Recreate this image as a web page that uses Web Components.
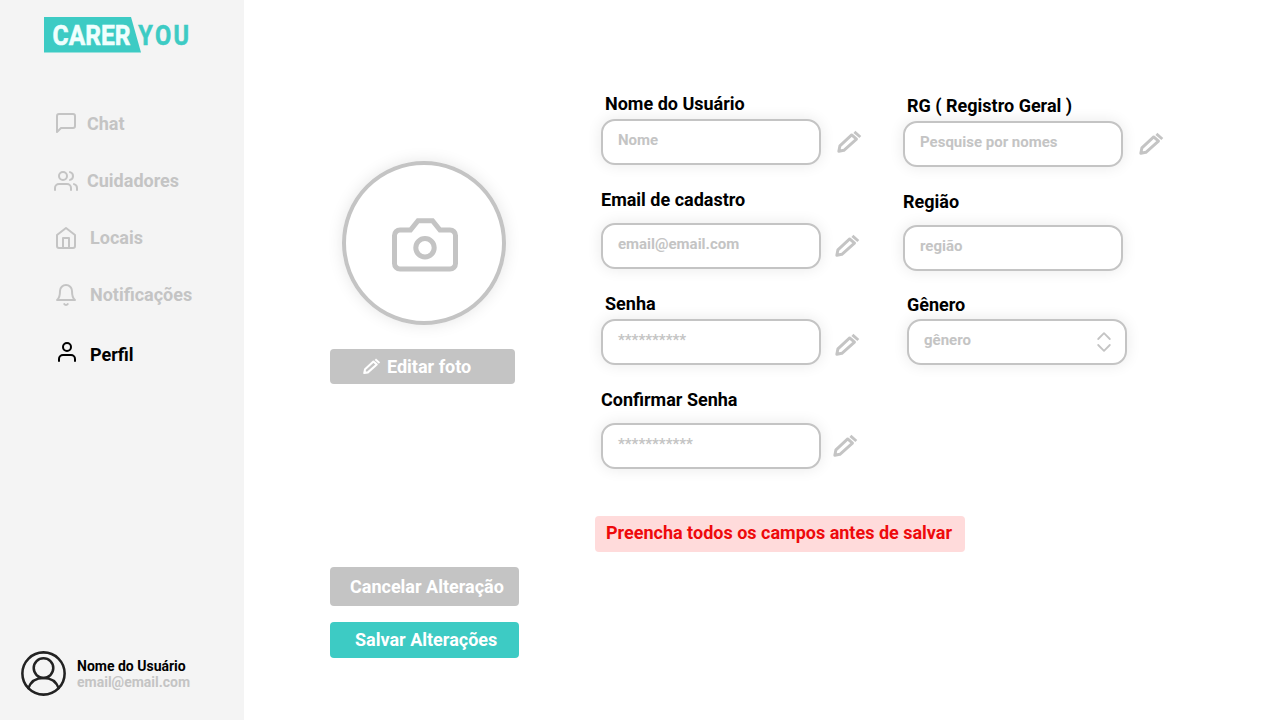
<!DOCTYPE html>
<html lang="pt-BR">
<head>
<meta charset="utf-8">
<title>Carer You - Perfil</title>
<style>
body{margin:0;background:#fff;font-family:Roboto,sans-serif;font-weight:700}
</style>
</head>
<body>
<profile-page></profile-page>
<script>
const define = (name, html) => {
  const t = document.createElement('template');
  t.innerHTML = html;
  customElements.define(name, class extends HTMLElement {
    constructor() {
      super();
      this.attachShadow({mode: 'open'}).append(t.content.cloneNode(true));
    }
  });
};

const icons = {
  chat: ['0 0 24 24', '<path d="M21 15a2 2 0 0 1-2 2H7l-4 4V5a2 2 0 0 1 2-2h14a2 2 0 0 1 2 2z"/>', 2],
  users: ['0 0 24 24', '<path d="M17 21v-2a4 4 0 0 0-4-4H5a4 4 0 0 0-4 4v2"/><circle cx="9" cy="7" r="4"/><path d="M23 21v-2a4 4 0 0 0-3-3.87M16 3.13a4 4 0 0 1 0 7.75"/>', 2],
  home: ['0 0 24 24', '<path d="M3 9l9-7 9 7v11a2 2 0 0 1-2 2H5a2 2 0 0 1-2-2z"/><path d="M9 22V12h6v10"/>', 2],
  bell: ['0 0 24 24', '<path d="M18 8A6 6 0 0 0 6 8c0 7-3 9-3 9h18s-3-2-3-9M13.73 21a2 2 0 0 1-3.46 0"/>', 2],
  user: ['0 0 24 24', '<path d="M20 21v-2a4 4 0 0 0-4-4H8a4 4 0 0 0-4 4v2"/><circle cx="12" cy="7" r="4"/>', 2],
  camera: ['0 0 66 54', '<path d="M2.5 17.500a5.500 5.500 0 0 1 5.500-5.500H18.500L26 2.700H40.500L48 12H58a5.500 5.500 0 0 1 5.500 5.500V45.500a5.500 5.500 0 0 1-5.500 5.500H8a5.500 5.500 0 0 1-5.500-5.500z"/><circle cx="33" cy="29.800" r="9.200"/>', 5],
  pencil: ['0 0 24 22', '<path d="M1.800 20.200L2.900 14.900 14.700 3.900 19.500 8.100 6.900 19.300z"/><path d="M17.400 .9L23.300 6"/>', 2.9],
  sort: ['0 0 14 20', '<path d="M1.200 7L7 1.200 12.800 7M1.200 13L7 18.800 12.800 13"/>', 1.8],
  avatar: ['0 0 46 46', '<circle cx="23" cy="23" r="21.600"/><circle cx="23" cy="17.500" r="10"/><path d="M7.500 38C10 31 16 27.500 23 27.500S36 31 38.500 38"/>', 2.6]
};
customElements.define('ui-icon', class extends HTMLElement {
  connectedCallback() {
    const name = this.getAttribute('name');
    const [box, body, w] = icons[name];
    const cap = name === 'pencil' ? 'butt' : 'round';
    const join = name === 'camera' ? 'miter' : 'round';
    const root = this.shadowRoot || this.attachShadow({mode: 'open'});
    root.innerHTML = `<style>:host{display:block;flex:none;width:24px;height:24px}svg{display:block;width:100%;height:100%;overflow:visible}</style>
    <svg viewBox="${box}" fill="none" stroke="currentColor" stroke-width="${w}" stroke-linecap="${cap}" stroke-linejoin="${join}">${body}</svg>`;
  }
});

define('brand-logo', `<style>:host{display:block;width:150px;height:36px}svg{display:block;overflow:visible}text{font:700 28px Roboto,sans-serif;stroke-width:.6px}</style>
<svg width="150" height="36"><path d="M0 0H87L97 35.500H0z" fill="#3dcbc4"/>
<g transform="translate(8.600 28.200) scale(.82 1)"><text textLength="95" fill="#f0fffe" stroke="#f0fffe" lengthAdjust="spacingAndGlyphs">CARER</text></g>
<g transform="translate(94.300 28.200) scale(.84 1)"><text textLength="60.500" fill="#3dcbc4" stroke="#3dcbc4" lengthAdjust="spacing">YOU</text></g></svg>`);

define('nav-item', `<style>:host{display:flex;align-items:center;height:24px;color:#c4c4c4;font-size:18px;line-height:24px}
:host([active]){color:#000}
span{position:relative;top:1px}</style><slot name="icon"></slot><span><slot></slot></span>`);

define('side-bar', `<style>
:host{display:flex;flex-direction:column;box-sizing:border-box;width:244px;height:720px;background:#f4f4f4;padding:17px 0 24px 44px}
nav{display:flex;flex-direction:column;gap:33px;margin:58px 0 0 10px}
nav-item ui-icon{margin-right:9px}
.wide ui-icon{margin:1px 12px 0 0}
.people ui-icon{margin-top:1px}
nav-item[active]{margin-top:3px}
nav-item[active] ui-icon{margin:-5px 11px 0 1px}
footer{display:flex;align-items:center;gap:11px;margin:auto 0 0 -23px}
footer ui-icon{width:45px;height:45px;color:#222}
.who{display:flex;flex-direction:column;font-size:14px;line-height:16px;padding-top:1px}
.mail{color:#c4c4c4}
</style>
<brand-logo></brand-logo>
<nav>
<nav-item><ui-icon slot="icon" name="chat"></ui-icon>Chat</nav-item>
<nav-item class="people"><ui-icon slot="icon" name="users"></ui-icon>Cuidadores</nav-item>
<nav-item class="wide"><ui-icon slot="icon" name="home"></ui-icon>Locais</nav-item>
<nav-item class="wide"><ui-icon slot="icon" name="bell"></ui-icon>Notificações</nav-item>
<nav-item active><ui-icon slot="icon" name="user"></ui-icon>Perfil</nav-item>
</nav>
<footer><ui-icon name="avatar"></ui-icon><div class="who"><span>Nome do Usuário</span><span class="mail">email@email.com</span></div></footer>`);

define('app-button', `<style>:host{display:flex;align-items:center;box-sizing:border-box;border-radius:4px;background:#c4c4c4;color:#fff;font-size:18px;line-height:22px;white-space:nowrap}
:host([primary]){background:#3dcbc4}</style><slot name="icon"></slot><span><slot></slot></span>`);

define('form-field', `<style>
:host{display:block}
.label{padding-left:var(--indent,0px);font-size:18px;line-height:20px;height:20px;color:#000;white-space:nowrap}
.row{display:flex;align-items:flex-start;margin-top:var(--space,5px)}
.box{display:flex;justify-content:space-between;box-sizing:border-box;width:220px;height:46px;border:2px solid #c4c4c4;border-radius:14px;background:#fff;box-shadow:0 0 15px rgba(0,0,0,.09);padding:10px 15px 0;font-size:15px;line-height:18px;color:#c4c4c4}
</style>
<div class="label"><slot name="label"></slot></div>
<div class="row"><div class="box"><span><slot></slot></span><slot name="mark"></slot></div><slot name="edit"></slot></div>`);

define('profile-page', `<style>
:host{display:flex;width:1280px;height:720px;overflow:hidden}
.photo{display:flex;flex-direction:column;align-items:flex-start;width:277px;padding:161px 0 0 86px;box-sizing:border-box}
.circle{display:flex;align-items:center;justify-content:center;box-sizing:border-box;width:164px;height:164px;margin-left:12px;border:4px solid #c4c4c4;border-radius:50%;box-shadow:0 0 16px rgba(0,0,0,.1);color:#c4c4c4}
.circle ui-icon{width:66px;height:54px;margin:3px 0 0 1px}
.edit{width:185px;height:35px;margin-top:24px;padding-left:33px}
.edit ui-icon{width:17px;height:17px;margin-right:7px}
.cancel{width:189px;height:39px;margin-top:183px;padding-left:20px}
.save{width:189px;height:36px;margin-top:16px;padding-left:25px}
.form{padding:94px 0 0 80px}
.cols{display:flex;gap:42px}
.left,.right{display:flex;flex-direction:column;gap:25px;width:260px}
.right{padding-top:2px}
.form form-field ui-icon[name=pencil]{width:24px;height:22px;color:#c4c4c4;margin:12px 0 0 16px}
.loose{--space:13px}.in{--indent:4px}
form-field ui-icon[name=sort]{width:14px;height:20px;margin:1px -1px 0 0}
.genero{margin:-1px 0 0 4px;--space:4px}
.alert{display:block;box-sizing:border-box;width:370px;height:36px;margin:47px 0 0 -6px;padding-left:11px;border-radius:4px;background:#ffdbdb;color:#ee0a0c;font-size:18px;line-height:34px;white-space:nowrap}
</style>
<side-bar></side-bar>
<section class="photo">
<div class="circle"><ui-icon name="camera"></ui-icon></div>
<app-button class="edit"><ui-icon slot="icon" name="pencil"></ui-icon>Editar foto</app-button>
<app-button class="cancel">Cancelar Alteração</app-button>
<app-button class="save" primary>Salvar Alterações</app-button>
</section>
<section class="form">
<div class="cols">
<div class="left">
<form-field class="in"><span slot="label">Nome do Usuário</span>Nome<ui-icon slot="edit" name="pencil"></ui-icon></form-field>
<form-field class="loose"><span slot="label">Email de cadastro</span>email@email.com<ui-icon slot="edit" name="pencil" style="margin-left:14px"></ui-icon></form-field>
<form-field class="in"><span slot="label">Senha</span>**********<ui-icon slot="edit" name="pencil" style="margin:15px 0 0 14px"></ui-icon></form-field>
<form-field class="loose"><span slot="label">Confirmar Senha</span>***********<ui-icon slot="edit" name="pencil" style="margin-left:12px"></ui-icon></form-field>
</div>
<div class="right">
<form-field class="in"><span slot="label">RG ( Registro Geral )</span>Pesquise por nomes<ui-icon slot="edit" name="pencil"></ui-icon></form-field>
<form-field class="loose"><span slot="label">Região</span>região</form-field>
<form-field class="genero"><span slot="label">Gênero</span>gênero<ui-icon slot="mark" name="sort"></ui-icon></form-field>
</div>
</div>
<div class="alert">Preencha todos os campos antes de salvar</div>
</section>`);
</script>
</body>
</html>
